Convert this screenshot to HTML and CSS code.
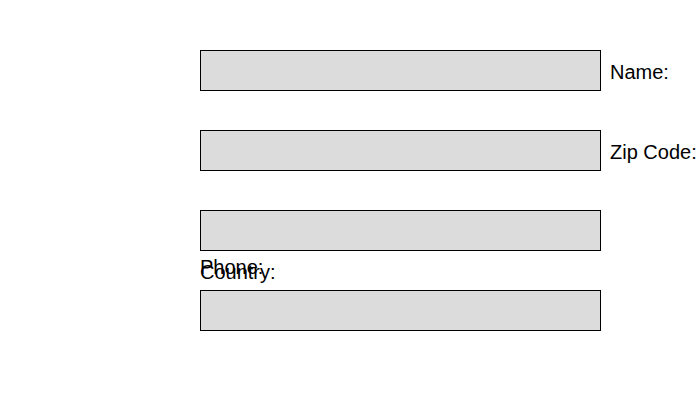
FILE: index.html
```html
<!DOCTYPE html>
<html>
<head>
<meta charset="utf-8">
<link rel="stylesheet" href="styles.css">
</head>
<body>
<form class="form">
  <div class="field r1"></div>
  <label class="label side r1">Name:</label>
  <div class="field r3"></div>
  <label class="label side r3">Zip Code:</label>
  <div class="field r5"></div>
  <label class="label under phone">Phone:</label>
  <label class="label under country">Country:</label>
  <div class="field r7"></div>
</form>
</body>
</html>
```
FILE: styles.css
```css
html, body {
  margin: 0;
  padding: 0;
  background: #ffffff;
}
body {
  min-height: 400px;
}
.form {
  display: grid;
  grid-template-columns: 401px auto;
  grid-template-rows: repeat(6, 40px) 41px;
  column-gap: 9px;
  margin: 50px 0 0 200px;
  padding-bottom: 20px;
  font-family: "Liberation Sans", Arial, sans-serif;
  font-size: 20px;
  color: #000;
}
.field {
  grid-column: 1;
  box-sizing: border-box;
  height: 41px;
  align-self: start;
  border: 1px solid #000;
  background: #dcdcdc;
}
.r1 { grid-row: 1; }
.r3 { grid-row: 3; }
.r5 { grid-row: 5; }
.r7 { grid-row: 7; }
.label {
  line-height: 23px;
  white-space: nowrap;
  align-self: start;
}
.side {
  grid-column: 2;
  margin-top: 11px;
}
.under {
  grid-column: 1;
  grid-row: 6;
}
.phone { margin-top: 6px; }
.country { margin-top: 11px; }
```
